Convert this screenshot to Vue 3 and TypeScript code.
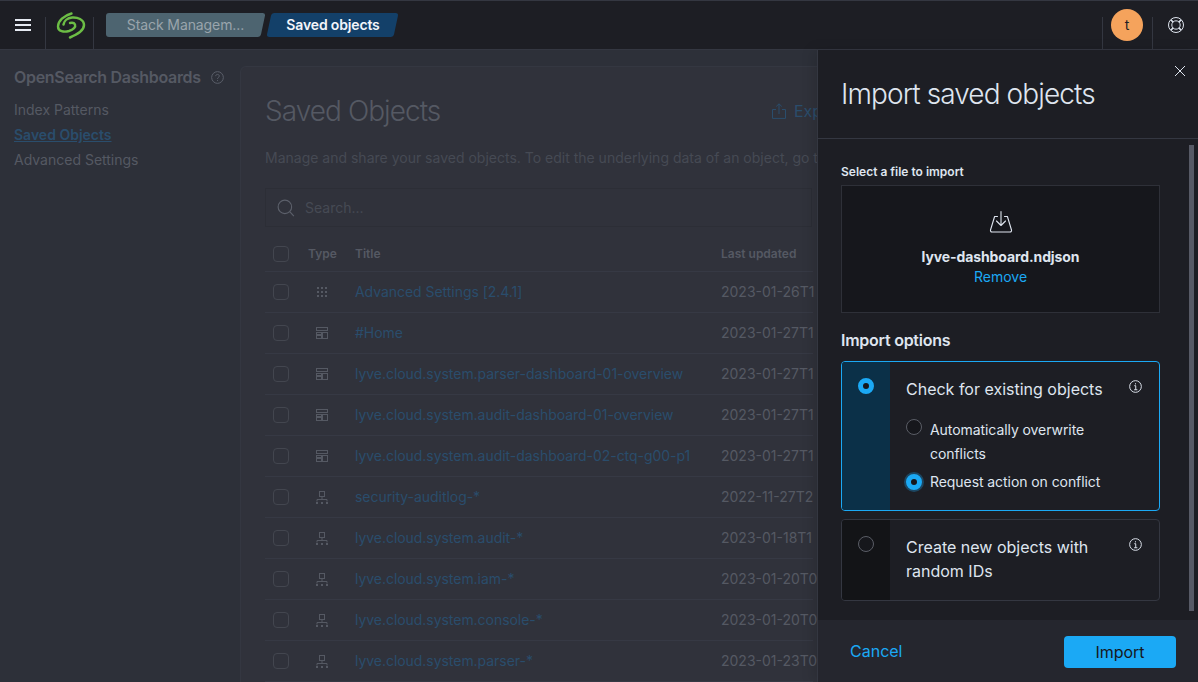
<script setup lang="ts">
interface Row {
  kind: 'settings' | 'dashboard' | 'index'
  title: string
  updated: string
}

const rows: Row[] = [
  { kind: 'settings', title: 'Advanced Settings [2.4.1]', updated: '2023-01-26T1' },
  { kind: 'dashboard', title: '#Home', updated: '2023-01-27T1' },
  { kind: 'dashboard', title: 'lyve.cloud.system.parser-dashboard-01-overview', updated: '2023-01-27T1' },
  { kind: 'dashboard', title: 'lyve.cloud.system.audit-dashboard-01-overview', updated: '2023-01-27T1' },
  { kind: 'dashboard', title: 'lyve.cloud.system.audit-dashboard-02-ctq-g00-p1', updated: '2023-01-27T1' },
  { kind: 'index', title: 'security-auditlog-*', updated: '2022-11-27T2' },
  { kind: 'index', title: 'lyve.cloud.system.audit-*', updated: '2023-01-18T1' },
  { kind: 'index', title: 'lyve.cloud.system.iam-*', updated: '2023-01-20T0' },
  { kind: 'index', title: 'lyve.cloud.system.console-*', updated: '2023-01-20T0' },
  { kind: 'index', title: 'lyve.cloud.system.parser-*', updated: '2023-01-23T0' },
]

const navLinks = ['Index Patterns', 'Saved Objects', 'Advanced Settings']
</script>

<template>
  <div class="app">
    <header class="topbar">
      <div class="top-left">
        <button class="menu-btn" aria-label="Menu"><span></span><span></span><span></span></button>
        <div class="logo-cell">
          <svg width="40" height="34" viewBox="0 0 40 34" fill="none" stroke="#6cbd45" stroke-linecap="round">
            <path d="M20 29.5C27 26.5 34 23 34 17C34 11.5 27.5 9 22 9.5C17.5 10 14 13 13.5 16.5" stroke-width="2.5" />
            <path d="M21.5 5.5C14 7.5 8 13 8 18.5C8 23.5 14 24.5 19 23C23.5 21.5 26 19 25 16.5C24.3 15 22 14.5 20 15" stroke-width="2.4" />
          </svg>
        </div>
        <nav class="crumbs">
          <span class="crumb first">Stack Managem...</span>
          <span class="crumb current">Saved objects</span>
        </nav>
      </div>
      <div class="top-right">
        <div class="top-cell">
          <span class="avatar">t</span>
        </div>
        <div class="top-cell help">
          <svg width="16" height="16" viewBox="0 0 16 16" fill="none" stroke="#dfe5ef">
            <circle cx="8" cy="8" r="7.5" />
            <circle cx="8" cy="8" r="4.2" />
            <path d="M2.8 2.8l2.3 2.3M13.2 2.8l-2.3 2.3M2.8 13.2l2.3-2.3M13.2 13.2l-2.3-2.3" stroke-width="1.6" />
          </svg>
        </div>
      </div>
    </header>

    <main class="page">
      <aside class="sidebar">
        <h2 class="side-title">
          <span>OpenSearch Dashboards</span>
          <svg width="13" height="13" viewBox="0 0 16 16" fill="none" stroke="#5c606b" stroke-width="1.2">
            <circle cx="8" cy="8" r="7.2" />
            <path d="M5.8 6.3C5.8 5 6.8 4.2 8 4.2s2.2.8 2.2 2c0 1.8-2.2 1.8-2.2 3.5" />
            <path d="M8 11.2v1.2" />
          </svg>
        </h2>
        <a v-for="(link, i) in navLinks" :key="link" class="side-link" :class="{ active: i === 1 }">{{ link }}</a>
      </aside>

      <section class="panel">
        <div class="panel-head">
          <h1 class="page-title">Saved Objects</h1>
          <span class="export">
            <svg width="16" height="16" viewBox="0 0 16 16" fill="none" stroke="#2a4d6c">
              <path d="M5 6.5H1.5v8.9h13V6.5H11M8 11V1M5.2 3.5L8 .8l2.8 2.7" />
            </svg>
            Export
          </span>
        </div>
        <p class="desc">Manage and share your saved objects. To edit the underlying data of an object, go to its</p>

        <div class="search">
          <svg width="18" height="18" viewBox="0 0 16 16" fill="none" stroke="#5c606b">
            <circle cx="7" cy="7" r="6" />
            <path d="M11.5 11.5l3.5 3.7" />
          </svg>
          <span>Search...</span>
        </div>

        <div class="table">
          <div class="tr th">
            <span class="check"></span>
            <span class="c-type">Type</span>
            <span class="c-title">Title</span>
            <span class="c-date">Last updated</span>
          </div>
          <div v-for="row in rows" :key="row.title" class="tr">
            <span class="check"></span>
            <span class="c-type icon-cell">
              <svg v-if="row.kind === 'settings'" width="16" height="16" viewBox="0 0 16 16" fill="#555963">
                <template v-for="x in [3, 7, 11]" :key="x">
                  <rect v-for="y in [3, 7, 11]" :key="y" :x="x" :y="y" width="2" height="2" />
                </template>
              </svg>
              <svg v-else-if="row.kind === 'dashboard'" width="16" height="16" viewBox="0 0 16 16" fill="none" stroke="#555963">
                <rect x="2.5" y="2.5" width="11" height="3" />
                <rect x="2.5" y="7.5" width="5" height="2" />
                <rect x="2.5" y="10.5" width="5" height="3" />
                <rect x="8.5" y="7.5" width="5" height="6" />
              </svg>
              <svg v-else width="16" height="16" viewBox="0 0 16 16" fill="none" stroke="#555963">
                <rect x="5.5" y="2.5" width="5" height="5" />
                <path d="M8 7.5v3M3 12.5v-2h10v2" />
                <path d="M2 13h2v2H2zM7 13h2v2H7zM12 13h2v2h-2z" fill="#555963" stroke="none" />
              </svg>
            </span>
            <a class="c-title link">{{ row.title }}</a>
            <span class="c-date value">{{ row.updated }}</span>
          </div>
        </div>
      </section>
    </main>

    <aside class="flyout">
      <svg class="close" width="12" height="12" viewBox="0 0 12 12" stroke="#dfe5ef" stroke-width="1">
        <path d="M1 1l10 10M11 1L1 11" />
      </svg>
      <div class="fly-head">
        <h2>Import saved objects</h2>
      </div>
      <div class="fly-body">
        <div class="fly-scroll">
          <label class="field-label">Select a file to import</label>
          <div class="file-box">
            <svg width="24" height="24" viewBox="0 0 24 24" fill="none" stroke="#dfe5ef" stroke-width="1.1" stroke-linecap="round" stroke-linejoin="round">
              <path d="M8.5 6.5H5.6L1.5 20a1.6 1.6 0 0 0 1.4 2h18.2a1.6 1.6 0 0 0 1.4-2L18.4 6.5h-2.9" />
              <path d="M12 1.5V15M7.5 11l4.5 4.5 4.5-4.5" />
            </svg>
            <strong>lyve-dashboard.ndjson</strong>
            <a>Remove</a>
          </div>

          <h3 class="options-title">Import options</h3>

          <div class="card selected">
            <div class="card-side"><span class="radio on"></span></div>
            <div class="card-main">
              <div class="card-title">
                <span>Check for existing objects</span>
                <svg class="info" width="13" height="13" viewBox="0 0 16 16" fill="none" stroke="#dfe5ef" stroke-width="1.2">
                  <circle cx="8" cy="8" r="7.2" />
                  <path d="M6.5 7H8.3V12M6.3 12h4M8 4v1.4" />
                </svg>
              </div>
              <div class="sub-opt">
                <span class="radio"></span>
                <span class="sub-text">Automatically overwrite conflicts</span>
              </div>
              <div class="sub-opt last">
                <span class="radio on focus"></span>
                <span class="sub-text">Request action on conflict</span>
              </div>
            </div>
          </div>

          <div class="card">
            <div class="card-side"><span class="radio"></span></div>
            <div class="card-main">
              <div class="card-title">
                <span>Create new objects with random IDs</span>
                <svg class="info" width="13" height="13" viewBox="0 0 16 16" fill="none" stroke="#dfe5ef" stroke-width="1.2">
                  <circle cx="8" cy="8" r="7.2" />
                  <path d="M6.5 7H8.3V12M6.3 12h4M8 4v1.4" />
                </svg>
              </div>
            </div>
          </div>
        </div>
        <div class="scrollbar"></div>
      </div>
      <footer class="fly-foot">
        <a class="cancel">Cancel</a>
        <button class="import-btn">Import</button>
      </footer>
    </aside>
  </div>
</template>

<style>
html,
body {
  margin: 0;
  overflow: hidden;
  background: #2d3039;
}
</style>

<style scoped>
.app {
  position: relative;
  width: 1198px;
  height: 682px;
  overflow: hidden;
  font-family: Inter, "Liberation Sans", sans-serif;
  font-size: 14px;
  color: #dfe5ef;
  background: #2d3039;
}

h1, h2, h3, p {
  margin: 0;
}

/* Top bar */
.topbar {
  height: 50px;
  box-sizing: border-box;
  display: flex;
  justify-content: space-between;
  background: #1d1e24;
  border-top: 1px solid #343741;
  border-bottom: 1px solid #343741;
}

.top-left,
.top-right {
  display: flex;
}

.menu-btn {
  width: 46px;
  padding: 0;
  background: none;
  border: 0;
  display: flex;
  flex-direction: column;
  align-items: center;
  justify-content: center;
  gap: 3px;
  position: relative;
}

.menu-btn span {
  width: 16px;
  height: 2px;
  background: #e6eaf2;
}

.menu-btn::after,
.logo-cell::after,
.top-cell::before {
  content: "";
  position: absolute;
  top: 16px;
  bottom: 0;
  width: 1px;
  background: #343741;
}

.menu-btn::after {
  right: 0;
}

.logo-cell {
  width: 48px;
  display: flex;
  align-items: center;
  justify-content: center;
  position: relative;
  box-sizing: border-box;
}

.logo-cell::after {
  right: 0;
}

.crumbs {
  display: flex;
  align-items: flex-start;
  gap: 2px;
  margin: 12px 0 0 12px;
}

.crumb {
  position: relative;
  z-index: 0;
  height: 24px;
  line-height: 24px;
  text-align: center;
  box-sizing: border-box;
}

.crumb::before {
  content: "";
  position: absolute;
  inset: 0;
  z-index: -1;
  border-radius: 3px;
  transform: skewX(-12deg);
}

.crumb.first {
  width: 159px;
  letter-spacing: -0.1px;
  color: #9aa4ac;
}

.crumb.first::before {
  left: 8px;
  right: 2px;
  background: #4d6470;
}

.crumb.first::after {
  content: "";
  position: absolute;
  z-index: -1;
  top: 0;
  bottom: 0;
  left: 0;
  width: 30px;
  border-radius: 3px 0 0 3px;
  background: #4d6470;
}

.crumb.current {
  width: 132px;
  font-weight: 600;
  letter-spacing: -0.15px;
  color: #f2f5fa;
}

.crumb.current::before {
  left: 2px;
  right: 3px;
  background: #134069;
}

.top-cell {
  position: relative;
  width: 50px;
  display: flex;
  align-items: center;
  justify-content: center;
  padding-bottom: 1px;
  box-sizing: border-box;
}

.top-cell::before {
  left: 0;
}

.top-cell.help {
  width: 46px;
  padding-left: 2px;
}

.avatar {
  width: 32px;
  height: 32px;
  border-radius: 50%;
  background: #f5a35c;
  color: #1d1e24;
  text-align: center;
  line-height: 32px;
  font-size: 14px;
}

/* Dimmed page */
.page {
  display: flex;
  height: 632px;
}

.sidebar {
  width: 240px;
  flex-shrink: 0;
  box-sizing: border-box;
  padding: 17px 0 0 14px;
}

.side-title {
  font-size: 16px;
  line-height: 20px;
  font-weight: 600;
  letter-spacing: -0.3px;
  white-space: nowrap;
  color: #555963;
  margin-bottom: 10px;
  display: flex;
  align-items: center;
  gap: 10px;
}

.side-link {
  display: block;
  line-height: 25px;
  color: #555963;
}

.side-link.active {
  color: #2a4d6c;
  font-weight: 600;
  text-decoration: underline;
}

.panel {
  flex: 1;
  min-width: 0;
  margin-top: 16px;
  padding: 22px 24px 0;
  border: 1px solid #343741;
  border-right: 0;
  border-bottom: 0;
  border-top-left-radius: 6px;
  background: #30323b;
}

.panel-head {
  display: flex;
  align-items: center;
  height: 44px;
}

.page-title {
  width: 506px;
  flex-shrink: 0;
  font-size: 28px;
  line-height: 42px;
  font-weight: 300;
  letter-spacing: -0.95px;
  color: #555963;
}

.export {
  display: flex;
  align-items: center;
  gap: 7px;
  font-size: 16px;
  color: #2a4d6c;
}

.desc {
  margin-top: 13px;
  line-height: 24px;
  white-space: nowrap;
  color: #464a54;
}

.search {
  width: 547px;
  height: 39px;
  margin-top: 18px;
  box-sizing: border-box;
  border: 1px solid #2c2e36;
  display: flex;
  align-items: center;
  gap: 10px;
  padding-left: 11px;
  color: #464a54;
}

.table {
  width: 548px;
  margin-top: 9px;
}

.tr {
  height: 41px;
  box-sizing: border-box;
  display: grid;
  grid-template-columns: 35px 47px 366px 1fr;
  align-items: center;
  padding-left: 8px;
  border-bottom: 1px solid #363944;
  white-space: nowrap;
}

.tr.th {
  height: 36px;
  font-size: 12px;
  font-weight: 600;
  color: #555963;
}

.check {
  width: 16px;
  height: 16px;
  box-sizing: border-box;
  border: 1px solid #43464f;
  border-radius: 4px;
}

.icon-cell {
  display: flex;
  padding-left: 6px;
}

.link {
  color: #2a4d6c;
  letter-spacing: -0.04px;
  margin-bottom: 2px;
}

.value {
  color: #555963;
  margin-bottom: 2px;
}

/* Flyout */
.flyout {
  position: absolute;
  top: 50px;
  right: 0;
  bottom: 0;
  width: 381px;
  box-sizing: border-box;
  display: flex;
  flex-direction: column;
  background: #1d1e24;
  border-left: 1px solid #343741;
  box-shadow: -4px 0 12px rgba(0, 0, 0, 0.12);
}

.close {
  position: absolute;
  top: 15px;
  right: 12px;
}

.fly-head {
  height: 89px;
  box-sizing: border-box;
  padding: 23px 24px 0 23px;
  border-bottom: 1px solid #343741;
}

.fly-head h2 {
  font-size: 28px;
  line-height: 42px;
  font-weight: 300;
  letter-spacing: -0.9px;
  color: #dfe5ef;
}

.fly-body {
  flex: 1;
  min-height: 0;
  display: flex;
}

.fly-scroll {
  width: 319px;
  margin-left: 23px;
  padding-top: 25px;
}

.field-label {
  display: block;
  font-size: 12px;
  line-height: 15px;
  font-weight: 600;
  margin-bottom: 6px;
}

.file-box {
  height: 128px;
  box-sizing: border-box;
  background: #16171c;
  border: 1px solid #2e3038;
  display: flex;
  flex-direction: column;
  align-items: center;
  padding-top: 24px;
}

.file-box strong {
  margin-top: 13px;
  font-weight: 700;
  line-height: 20px;
  letter-spacing: -0.1px;
}

.file-box a {
  line-height: 20px;
  color: #1ba9f5;
}

.options-title {
  margin-top: 17px;
  font-size: 16px;
  font-weight: 600;
  line-height: 20px;
  letter-spacing: -0.25px;
}

.card {
  display: flex;
  margin-top: 8px;
  box-sizing: border-box;
  border: 1px solid #343741;
  border-radius: 4px;
  overflow: hidden;
  min-height: 82px;
}

.options-title + .card {
  margin-top: 11px;
}

.card.selected {
  height: 150px;
  border-color: #1ba9f5;
}

.card-side {
  width: 48px;
  flex-shrink: 0;
  box-sizing: border-box;
  padding: 16px 0 0 16px;
  background: #131417;
}

.selected .card-side {
  background: #0b3048;
}

.card-main {
  flex: 1;
  padding: 15px 17px 0 16px;
}

.card-title {
  display: flex;
  justify-content: space-between;
  font-size: 16px;
  line-height: 24px;
}

.card-title span {
  width: 200px;
  flex-shrink: 0;
}

.selected .card-title span {
  width: 210px;
}

.info {
  margin-top: 3px;
}

.sub-opt {
  display: flex;
  gap: 8px;
  margin-top: 17px;
  line-height: 24px;
}

.sub-opt.last {
  margin-top: 4px;
}

.sub-text {
  width: 190px;
  letter-spacing: -0.07px;
}

.radio {
  width: 16px;
  height: 16px;
  flex-shrink: 0;
  box-sizing: border-box;
  display: block;
  border: 1px solid #5a5d66;
  border-radius: 50%;
  background: #16171c;
}

.sub-opt .radio {
  margin-top: 1px;
}

.radio.on {
  border: 5px solid #1ba9f5;
  background: #16171c;
}

.radio.focus {
  margin-top: 4px;
  box-shadow: 0 0 0 2px rgba(27, 169, 245, 0.3);
}

.scrollbar {
  width: 5px;
  height: 466px;
  margin: 6px 0 0 29px;
  background: #575a66;
}

.fly-foot {
  height: 62px;
  flex-shrink: 0;
  box-sizing: border-box;
  padding: 2px 22px 0 32px;
  background: #25262e;
  display: flex;
  align-items: center;
  justify-content: space-between;
}

.cancel {
  font-size: 16px;
  margin-top: -2px;
  color: #1ba9f5;
}

.import-btn {
  width: 112px;
  height: 32px;
  border: 0;
  border-radius: 4px;
  background: #1ba9f5;
  color: #16171c;
  font-family: inherit;
  font-size: 16px;
}
</style>
